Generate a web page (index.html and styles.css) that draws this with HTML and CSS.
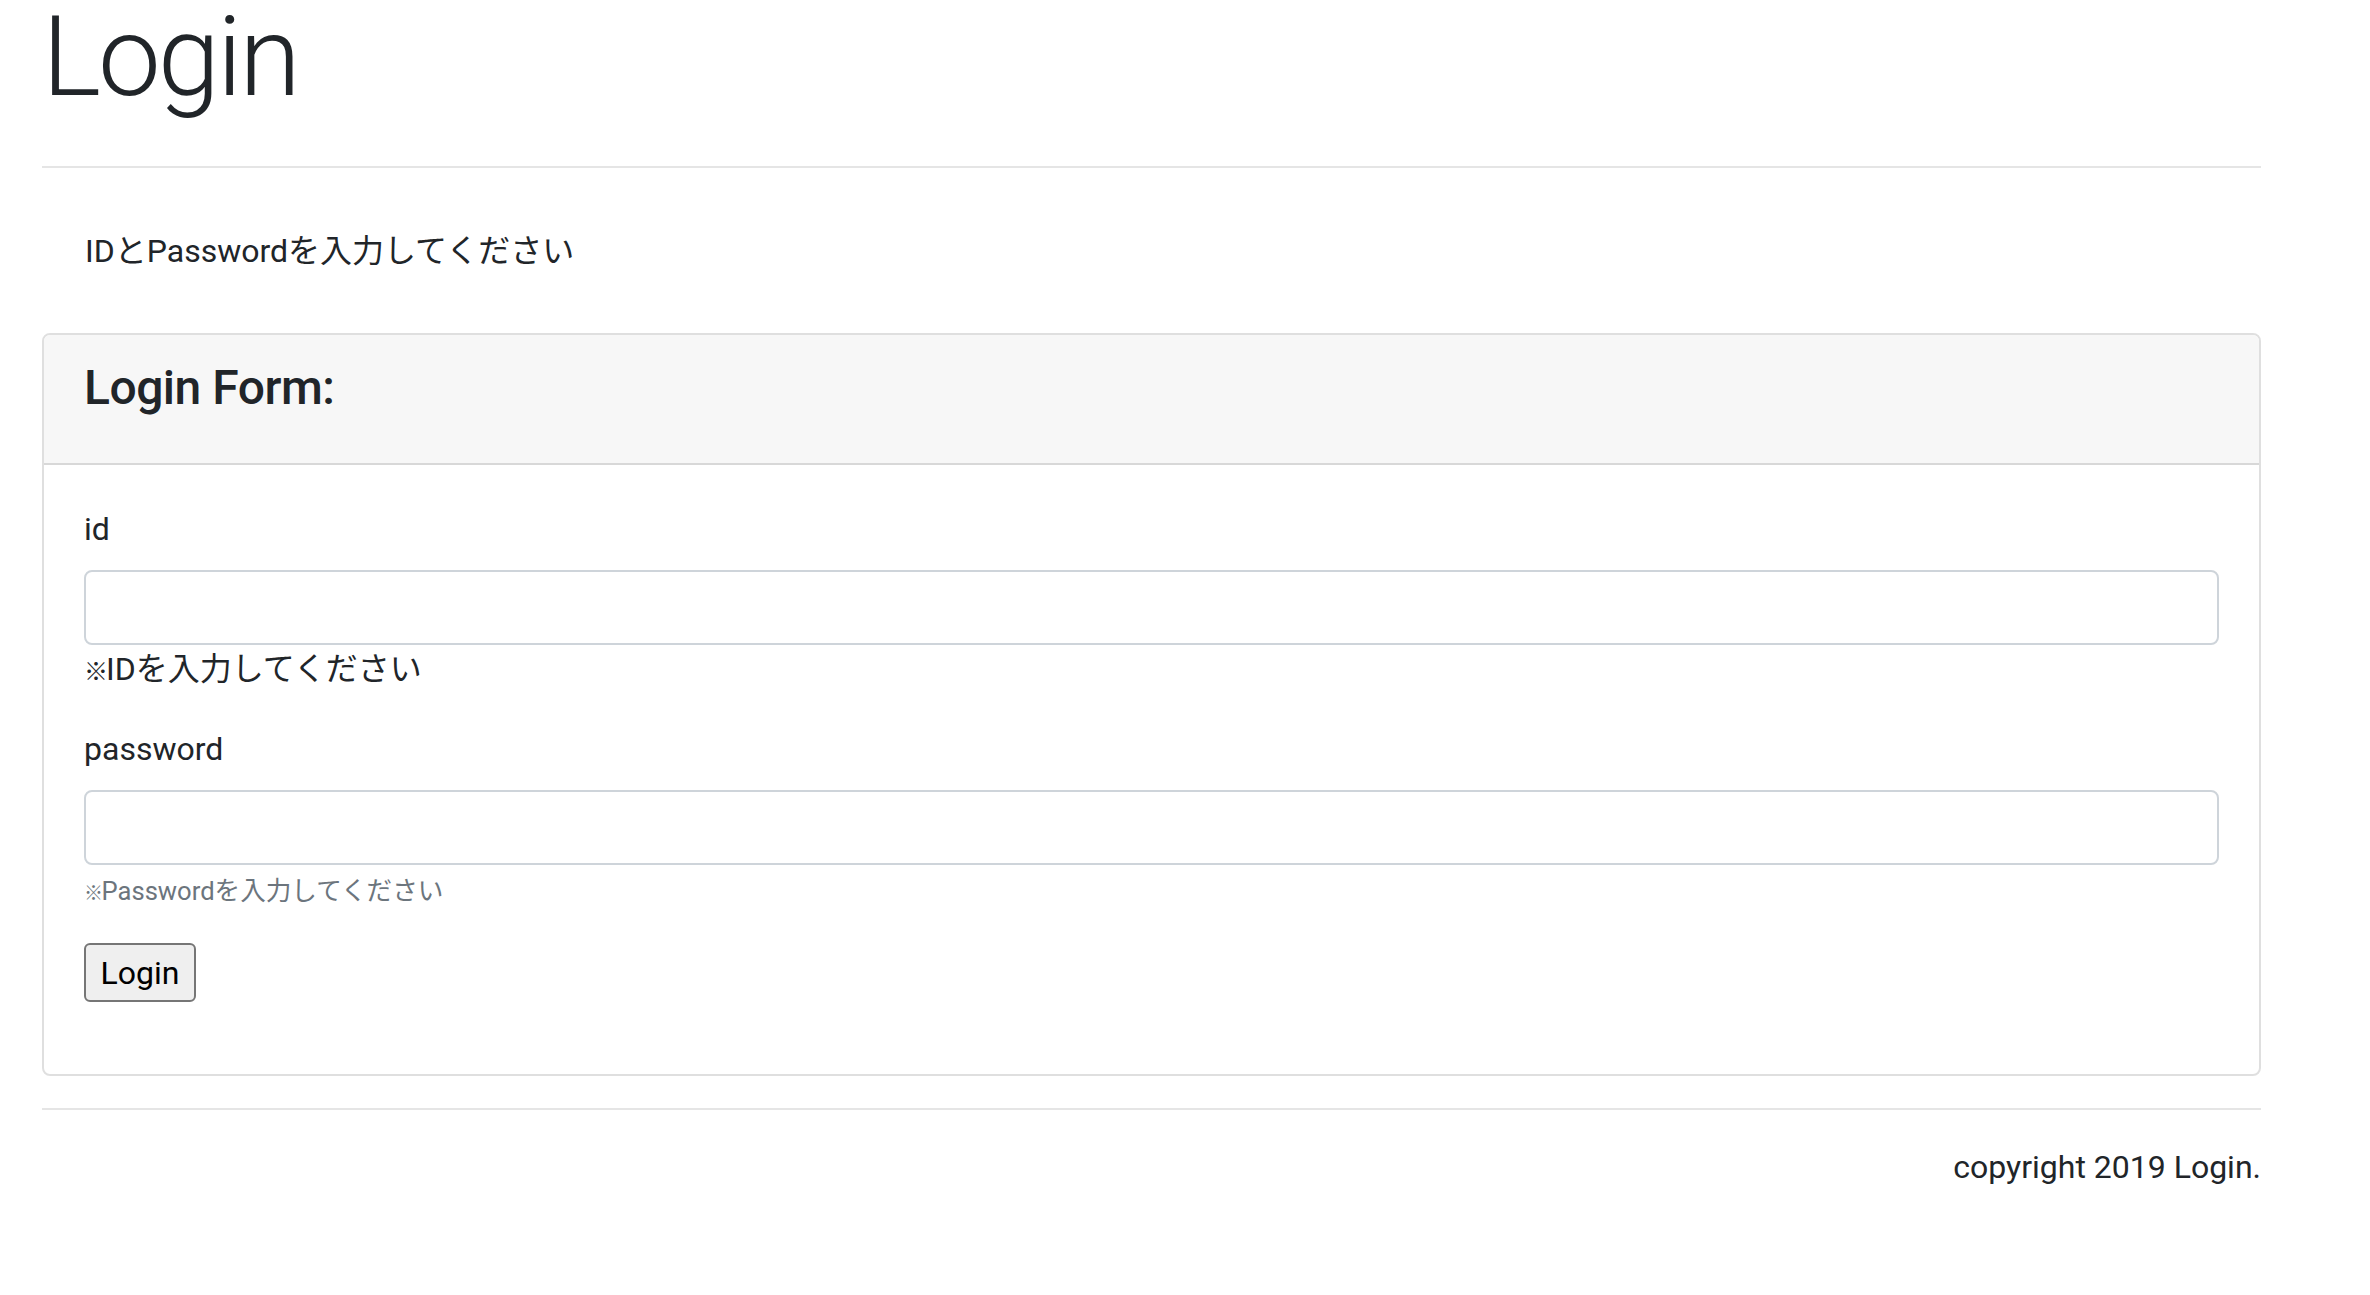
FILE: index.html
```html
<!DOCTYPE html>
<html lang="ja">
<head>
<meta charset="utf-8">
<title>Login</title>
<link rel="stylesheet" href="styles.css">
</head>
<body>
<div class="container">
  <h1 class="page-title">Login</h1>
  <hr class="rule rule-top">
  <p class="intro">IDとPasswordを入力してください</p>
  <div class="card">
    <div class="card-header">
      <h4 class="card-title">Login Form:</h4>
    </div>
    <div class="card-body">
      <form class="login-form">
        <div class="form-group">
          <label class="field-label" for="id">id</label>
          <input class="form-control" type="text" id="id">
          <div class="hint"><span class="mark">※</span>IDを入力してください</div>
        </div>
        <div class="form-group">
          <label class="field-label" for="password">password</label>
          <input class="form-control" type="password" id="password">
          <small class="form-text"><span class="mark mark-small">※</span>Passwordを入力してください</small>
        </div>
        <div class="form-group">
          <button class="btn-login" type="button">Login</button>
        </div>
      </form>
    </div>
  </div>
  <hr class="rule rule-bottom">
  <footer class="footer">copyright 2019 Login.</footer>
</div>
</body>
</html>
```

FILE: styles.css
```css
html, body {
  margin: 0;
  padding: 0;
  background: #ffffff;
}

body {
  font-family: "Roboto", "Noto Sans CJK JP", sans-serif;
  font-size: 32px;
  line-height: 48px;
  color: #212529;
}

.container {
  margin-left: 42px;
  width: 2219px;
}

.page-title {
  margin: 0;
  padding-top: 2px;
  font-size: 112px;
  font-weight: 300;
  line-height: 110px;
  letter-spacing: -3px;
}

.rule {
  border: 0;
  border-top: 2px solid rgba(0, 0, 0, 0.1);
  margin: 0;
  height: 0;
}

.rule-top {
  margin-top: 54px;
}

.intro {
  margin: 59px 0 58px 0;
  padding-left: 43px;
}

.card {
  border: 2px solid rgba(0, 0, 0, 0.125);
  border-radius: 8px;
  overflow: hidden;
}

.card-header {
  background: #f7f7f7;
  border-bottom: 2px solid rgba(0, 0, 0, 0.125);
  padding: 24px 40px;
}

.card-title {
  margin: 0 0 22px 0;
  font-size: 48px;
  font-weight: 500;
  line-height: 58px;
  letter-spacing: -0.5px;
}

.card-body {
  padding: 40px;
}

.login-form {
  margin: 0;
}

.form-group {
  margin-bottom: 32px;
}

.field-label {
  display: block;
  margin-bottom: 17px;
}

.form-control {
  display: block;
  box-sizing: border-box;
  width: 100%;
  height: 75px;
  margin: 0;
  padding: 12px 24px;
  font: inherit;
  color: #495057;
  background: #ffffff;
  border: 2px solid #ced4da;
  border-radius: 8px;
}

.hint {
  height: 48px;
  color: #212529;
}

.mark {
  font-size: 24px;
  line-height: 0;
  letter-spacing: -2px;
}

.mark-small {
  font-size: 19px;
  letter-spacing: -1.5px;
}

.form-text {
  display: block;
  height: 39px;
  margin-top: 7px;
  font-size: 25.6px;
  line-height: 39px;
  color: #6c757d;
}

.btn-login {
  box-sizing: border-box;
  width: 112px;
  height: 59px;
  padding: 0;
  font-family: "Roboto", sans-serif;
  font-size: 32px;
  color: #000000;
  background: #efefef;
  border: 2px solid #767676;
  border-radius: 6px;
}

.rule-bottom {
  margin-top: 32px;
}

.footer {
  margin-top: 33px;
  text-align: right;
}
```
